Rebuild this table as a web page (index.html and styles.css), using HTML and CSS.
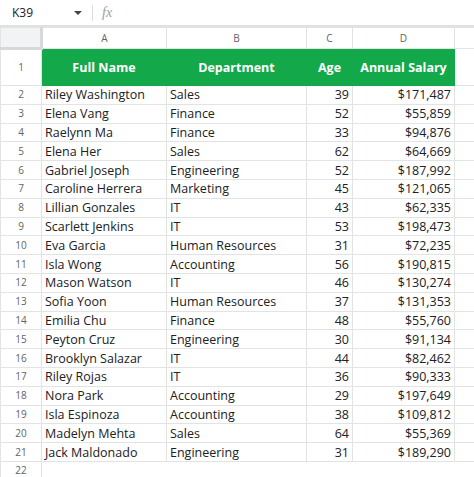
FILE: index.html
```html
<!DOCTYPE html>
<html>
<head>
<meta charset="utf-8">
<link rel="stylesheet" href="styles.css">
</head>
<body>
<div class="fbar">
  <div class="namebox">K39</div>
  <div class="caret"></div>
  <div class="sep"></div>
  <div class="fx">fx</div>
</div>
<table class="grid">
  <colgroup>
    <col class="c0"><col class="ca"><col class="cb"><col class="cc"><col class="cd"><col class="ce">
  </colgroup>
  <tr class="colhead">
    <th class="corner"></th><th>A</th><th>B</th><th>C</th><th>D</th><th></th>
  </tr>
  <tr class="hrow">
    <td class="rn">1</td><td class="h">Full Name</td><td class="h">Department</td><td class="h">Age</td><td class="h">Annual Salary</td><td></td>
  </tr>
  <tr><td class="rn">2</td><td>Riley Washington</td><td>Sales</td><td class="r">39</td><td class="r">$171,487</td><td></td></tr>
  <tr><td class="rn">3</td><td>Elena Vang</td><td>Finance</td><td class="r">52</td><td class="r">$55,859</td><td></td></tr>
  <tr><td class="rn">4</td><td>Raelynn Ma</td><td>Finance</td><td class="r">33</td><td class="r">$94,876</td><td></td></tr>
  <tr><td class="rn">5</td><td>Elena Her</td><td>Sales</td><td class="r">62</td><td class="r">$64,669</td><td></td></tr>
  <tr><td class="rn">6</td><td>Gabriel Joseph</td><td>Engineering</td><td class="r">52</td><td class="r">$187,992</td><td></td></tr>
  <tr><td class="rn">7</td><td>Caroline Herrera</td><td>Marketing</td><td class="r">45</td><td class="r">$121,065</td><td></td></tr>
  <tr><td class="rn">8</td><td>Lillian Gonzales</td><td>IT</td><td class="r">43</td><td class="r">$62,335</td><td></td></tr>
  <tr><td class="rn">9</td><td>Scarlett Jenkins</td><td>IT</td><td class="r">53</td><td class="r">$198,473</td><td></td></tr>
  <tr><td class="rn">10</td><td>Eva Garcia</td><td>Human Resources</td><td class="r">31</td><td class="r">$72,235</td><td></td></tr>
  <tr><td class="rn">11</td><td>Isla Wong</td><td>Accounting</td><td class="r">56</td><td class="r">$190,815</td><td></td></tr>
  <tr><td class="rn">12</td><td>Mason Watson</td><td>IT</td><td class="r">46</td><td class="r">$130,274</td><td></td></tr>
  <tr><td class="rn">13</td><td>Sofia Yoon</td><td>Human Resources</td><td class="r">37</td><td class="r">$131,353</td><td></td></tr>
  <tr><td class="rn">14</td><td>Emilia Chu</td><td>Finance</td><td class="r">48</td><td class="r">$55,760</td><td></td></tr>
  <tr><td class="rn">15</td><td>Peyton Cruz</td><td>Engineering</td><td class="r">30</td><td class="r">$91,134</td><td></td></tr>
  <tr><td class="rn">16</td><td>Brooklyn Salazar</td><td>IT</td><td class="r">44</td><td class="r">$82,462</td><td></td></tr>
  <tr><td class="rn">17</td><td>Riley Rojas</td><td>IT</td><td class="r">36</td><td class="r">$90,333</td><td></td></tr>
  <tr><td class="rn">18</td><td>Nora Park</td><td>Accounting</td><td class="r">29</td><td class="r">$197,649</td><td></td></tr>
  <tr><td class="rn">19</td><td>Isla Espinoza</td><td>Accounting</td><td class="r">38</td><td class="r">$109,812</td><td></td></tr>
  <tr><td class="rn">20</td><td>Madelyn Mehta</td><td>Sales</td><td class="r">64</td><td class="r">$55,369</td><td></td></tr>
  <tr><td class="rn">21</td><td>Jack Maldonado</td><td>Engineering</td><td class="r">31</td><td class="r">$189,290</td><td></td></tr>
  <tr class="last"><td class="rn">22</td><td class="blank"></td><td class="blank"></td><td class="blank"></td><td class="blank"></td><td class="blank"></td></tr>
</table>
</body>
</html>
```
FILE: styles.css
```css
html, body {
  margin: 0;
  padding: 0;
  background: #ffffff;
  overflow: hidden;
}
body {
  font-family: "Open Sans", "Noto Sans", sans-serif;
  color: #202124;
}
.fbar {
  height: 25px;
  display: flex;
  align-items: center;
  border-bottom: 2px solid #e0e0e0;
  position: relative;
}
.namebox {
  font-size: 12px;
  color: #202124;
  margin-left: 12px;
  width: 62px;
}
.caret {
  width: 0;
  height: 0;
  border-left: 4px solid transparent;
  border-right: 4px solid transparent;
  border-top: 4px solid #444;
  margin-left: 0;
}
.sep {
  width: 1px;
  height: 16px;
  background: #dadce0;
  margin-left: 10px;
}
.fx {
  font-family: "Liberation Serif", serif;
  font-style: italic;
  color: #9aa0a6;
  font-size: 14px;
  margin-left: 9px;
}
.grid {
  border-collapse: collapse;
  table-layout: fixed;
  width: 474px;
}
.c0 { width: 41px; }
.ca { width: 125px; }
.cb { width: 140px; }
.cc { width: 46px; }
.cd { width: 102px; }
.ce { width: 20px; }
.grid td, .grid th {
  border: 1px solid #e2e3e3;
  padding: 0 3px;
  white-space: nowrap;
  overflow: hidden;
}
.colhead th {
  height: 19px;
  font-weight: normal;
  font-size: 10px;
  color: #5f6368;
  background: #ffffff;
  text-align: center;
  padding: 0;
}
.colhead th.corner {
  background: #f1f3f4;
  border-right: 3px solid #d6d8da;
  border-bottom: 3px solid #d6d8da;
}
.grid tr td {
  height: 17.8px;
  font-size: 12.5px;
  line-height: 17px;
  font-weight: 500;
}
.grid td.rn {
  font-size: 10px;
  font-weight: 400;
  color: #5f6368;
  text-align: center;
  padding: 0;
}
.hrow td {
  height: 35px !important;
}
.hrow td.h {
  background: #13a84a;
  color: #ffffff;
  font-weight: 700;
  text-align: center;
  font-size: 12.5px;
  border-color: #13a84a;
}
.grid td.r {
  text-align: right;
}
.grid tr.last td.blank {
  border-left-color: transparent;
  border-right-color: transparent;
  border-bottom-color: transparent;
}
.grid tr.last td.rn {
  border-bottom-color: transparent;
}
```
